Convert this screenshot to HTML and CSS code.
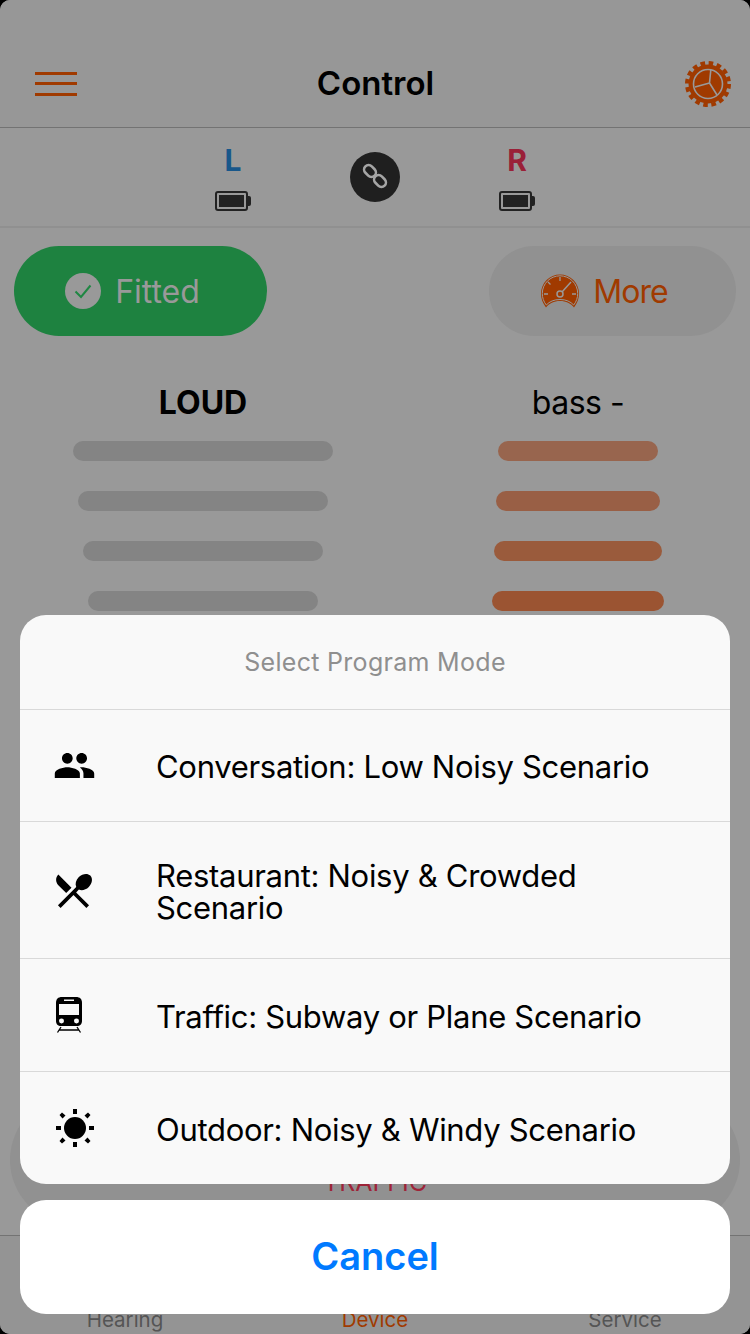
FILE: index.html
```html
<!DOCTYPE html>
<html lang="en">
<head>
    <meta charset="UTF-8">
    <meta name="viewport" content="width=device-width, initial-scale=1.0">
    <title>Control</title>
    <link rel="stylesheet" href="styles.css">
</head>
<body>
    <div class="screen">
        <header class="top-bar">
            <div class="menu-icon"><span></span><span></span><span></span></div>
            <h1>Control</h1>
            <svg class="gear-icon" viewBox="0 0 46 46">
                <circle cx="23" cy="23" r="19.5" fill="#a03a00"/>
                <circle cx="23" cy="23" r="21" fill="none" stroke="#a03a00" stroke-width="4" stroke-dasharray="4.600 3.650"/>
                <circle cx="23" cy="23" r="14.500" fill="none" stroke="#999" stroke-width="1.600"/>
                <path d="M24.500 22 L25.800 9 M24.500 22 L10 26 M24.500 22 L32 34" fill="none" stroke="#999" stroke-width="1.600"/>
            </svg>
        </header>

        <section class="devices">
            <div class="device">
                <span class="side side-left">L</span>
                <div class="battery"><span></span></div>
            </div>
            <div class="link-btn">
                <svg viewBox="0 0 50 50" width="50" height="50">
                    <rect x="13.500" y="14.500" width="13" height="9" rx="4.500" transform="rotate(45 20 19)" fill="none" stroke="#a5a5a5" stroke-width="2.600"/>
                    <rect x="23.500" y="24.500" width="13" height="9" rx="4.500" transform="rotate(45 30 29)" fill="none" stroke="#a5a5a5" stroke-width="2.600"/>
                </svg>
            </div>
            <div class="device">
                <span class="side side-right">R</span>
                <div class="battery"><span></span></div>
            </div>
        </section>

        <section class="actions">
            <button class="pill pill-fitted" type="button">
                <svg viewBox="0 0 36 36" width="36" height="36">
                    <circle cx="18" cy="18" r="18" fill="#999"/>
                    <path d="M10.500 18.500 L16 24 L25.500 12.500" fill="none" stroke="#1f8743" stroke-width="2"/>
                </svg>
                Fitted
            </button>
            <button class="pill pill-more" type="button">
                <svg viewBox="0 0 38 34" width="38" height="34">
                    <path d="M5 33.500 C1.500 29 0 24.500 0 19.500 A19 19 0 0 1 38 19.500 C38 24.500 36.500 29 33 33.500 C30 29.500 25 27 19 27 C13 27 8 29.500 5 33.500 Z" fill="#a03a00"/>
                    <path d="M5.300 31 C2.500 27.500 1.300 23.500 1.300 19.500 A17.700 17.700 0 0 1 36.700 19.500 C36.700 23.500 35.500 27.500 32.700 31 C29.500 27.500 25 25.500 19 25.500 C13 25.500 8.500 27.500 5.300 31 Z" fill="none" stroke="#999" stroke-width="1"/>
                    <path d="M19 3 V7 M7 8 L9.500 10.500 M3 20 H7 M31 20 H35" stroke="#999" stroke-width="1.300"/>
                    <circle cx="19" cy="20" r="3" fill="none" stroke="#999" stroke-width="1.500"/>
                    <path d="M21 18 L30 8" stroke="#999" stroke-width="1.500"/>
                </svg>
                More
            </button>
        </section>

        <section class="levels">
            <div class="level-col">
                <h2 class="level-title level-strong">LOUD</h2>
                <div class="bar bar-grey bar-w260"></div>
                <div class="bar bar-grey bar-w250"></div>
                <div class="bar bar-grey bar-w240"></div>
                <div class="bar bar-grey bar-w230"></div>
            </div>
            <div class="level-col">
                <h2 class="level-title">bass -</h2>
                <div class="bar bar-o1 bar-w160"></div>
                <div class="bar bar-o2 bar-w164"></div>
                <div class="bar bar-o3 bar-w168"></div>
                <div class="bar bar-o4 bar-w172"></div>
            </div>
        </section>

        <div class="program-pill"><span>TRAFFIC</span></div>

        <nav class="tab-bar">
            <span class="tab">Hearing</span>
            <span class="tab tab-active">Device</span>
            <span class="tab">Service</span>
        </nav>

        <div class="sheet-wrap">
            <div class="sheet">
                <div class="sheet-title">Select Program Mode</div>
                <div class="sheet-row">
                    <span class="row-icon">
                        <svg class="icon-people" viewBox="0 0 24 24"><path d="M16 11c1.660 0 2.990-1.340 2.990-3S17.660 5 16 5c-1.660 0-3 1.340-3 3s1.340 3 3 3zm-8 0c1.660 0 2.990-1.340 2.990-3S9.660 5 8 5C6.340 5 5 6.340 5 8s1.340 3 3 3zm0 2c-2.330 0-7 1.170-7 3.500V19h14v-2.500c0-2.330-4.670-3.500-7-3.500zm8 0c-.29 0-.62.02-.97.05 1.160.84 1.970 1.970 1.970 3.450V19h6v-2.500c0-2.330-4.670-3.500-7-3.500z"/></svg>
                    </span>
                    <span class="row-text">Conversation: Low Noisy Scenario</span>
                </div>
                <div class="sheet-row sheet-row-tall">
                    <span class="row-icon">
                        <svg class="icon-food" viewBox="0 0 24 24"><path d="M8.100 13.340l2.830-2.830L3.910 3.500c-1.560 1.560-1.560 4.090 0 5.660l4.190 4.180zm6.780-1.810c1.530.71 3.680.21 5.270-1.380 1.910-1.910 2.280-4.650.81-6.120-1.460-1.460-4.200-1.100-6.120.81-1.590 1.590-2.090 3.740-1.380 5.270L3.700 19.870l1.410 1.410L12 14.410l6.880 6.880 1.410-1.410L13.410 13l1.470-1.470z"/></svg>
                    </span>
                    <span class="row-text">Restaurant: Noisy &amp; Crowded Scenario</span>
                </div>
                <div class="sheet-row">
                    <span class="row-icon">
                        <svg class="icon-train" viewBox="0 0 26 36">
                            <path fill-rule="evenodd" d="M6 0 H20 C24 0 26 2 26 6 V24 C26 27 24 29 21 29 H5 C2 29 0 27 0 24 V6 C0 2 2 0 6 0 Z M8 2.500 V4 H18 V2.500 Z M3 7 V18 H23 V7 Z M5.500 21.500 A2.500 2.500 0 1 0 5.510 26.500 A2.500 2.500 0 1 0 5.500 21.500 Z M20.500 21.500 A2.500 2.500 0 1 0 20.510 26.500 A2.500 2.500 0 1 0 20.500 21.500 Z"/>
                            <path d="M5 30 L1.500 35.500 M21 30 L24.500 35.500 M3.500 33 H22.500" fill="none" stroke="#000" stroke-width="1.300"/>
                        </svg>
                    </span>
                    <span class="row-text">Traffic: Subway or Plane Scenario</span>
                </div>
                <div class="sheet-row">
                    <span class="row-icon">
                        <svg class="icon-sun" viewBox="0 0 38 38">
                            <circle cx="19" cy="19" r="11"/>
                            <path d="M17 0 H21 V5 H17 Z M17 33 H21 V38 H17 Z M0 17 H5 V21 H0 Z M33 17 H38 V21 H33 Z M6 3.500 L9.500 6.500 L6.500 9.500 L3.500 6 Z M32 3.500 L34.500 6 L31.500 9.500 L28.500 6.500 Z M6.500 28.500 L9.500 31.500 L6 34.500 L3.500 32 Z M31.500 28.500 L34.500 32 L32 34.500 L28.500 31.500 Z"/>
                        </svg>
                    </span>
                    <span class="row-text">Outdoor: Noisy &amp; Windy Scenario</span>
                </div>
            </div>
            <button class="cancel-btn" type="button">Cancel</button>
        </div>
    </div>
</body>
</html>
```

FILE: styles.css
```css
body, html {
    margin: 0;
    height: 100%;
    background: #000;
    font-family: Inter, "Noto Sans", sans-serif;
    overflow: hidden;
}
.screen {
    position: relative;
    width: 750px;
    height: 1334px;
    display: flex;
    flex-direction: column;
    background: #999;
    border-radius: 10px;
    overflow: hidden;
}
.top-bar {
    height: 87px;
    padding: 40px 19px 0 35px;
    display: grid;
    grid-template-columns: 1fr auto 1fr;
    align-items: center;
    background: #979797;
    border-bottom: 1px solid #737373;
}
.top-bar h1 {
    margin: -2px 15px 0 0;
    font-size: 33px;
    font-weight: 600;
    color: #000;
}
.menu-icon {
    width: 42px;
    height: 24px;
    display: flex;
    flex-direction: column;
    justify-content: space-between;
}
.menu-icon span {
    height: 3px;
    background: #a03a00;
}
.gear-icon {
    width: 46px;
    height: 46px;
    justify-self: end;
}
.devices {
    height: 98px;
    display: flex;
    justify-content: center;
    align-items: flex-end;
    gap: 99px;
    border-bottom: 2px solid #909090;
}
.device {
    width: 36px;
    height: 84px;
    display: flex;
    flex-direction: column;
    align-items: center;
    justify-content: space-between;
    padding-bottom: 15px;
    box-sizing: border-box;
}
.side {
    font-size: 30px;
    font-weight: 700;
    line-height: 36px;
}
.side-left {
    color: #18578a;
}
.side-right {
    color: #9a2038;
}
.battery {
    position: relative;
    width: 33px;
    height: 20px;
    margin-right: 3px;
    padding: 2px;
    box-sizing: border-box;
    border: 2px solid #222;
    border-radius: 3px;
}
.battery::after {
    content: "";
    position: absolute;
    right: -5px;
    top: 3px;
    width: 3px;
    height: 10px;
    background: #222;
    border-radius: 0 2px 2px 0;
}
.battery span {
    display: block;
    height: 100%;
    background: #222;
}
.link-btn {
    width: 50px;
    height: 50px;
    margin-bottom: 24px;
    border-radius: 50%;
    background: #1f1f1f;
}
.actions {
    display: flex;
    justify-content: space-between;
    padding: 18px 14px 0;
}
.pill {
    height: 90px;
    border: none;
    border-radius: 45px;
    display: flex;
    align-items: center;
    justify-content: center;
    gap: 14px;
    padding: 0 16px 0 0;
    font-family: inherit;
    font-size: 32px;
}
.pill-fitted {
    width: 253px;
    background: #1e8240;
    color: #999;
}
.pill-more {
    width: 247px;
    letter-spacing: -1px;
    background: #919191;
    color: #a03a00;
}
.levels {
    display: flex;
    padding-top: 47px;
}
.level-col {
    display: flex;
    flex-direction: column;
    align-items: center;
    gap: 30px;
    width: 406px;
}
.level-col:last-child {
    width: 344px;
}
.level-title {
    margin: 0 0 -11px;
    height: 39px;
    line-height: 39px;
    font-size: 32px;
    font-weight: 400;
    letter-spacing: -.5px;
    color: #000;
}
.level-strong {
    font-weight: 700;
    letter-spacing: 0;
}
.bar {
    height: 20px;
    border-radius: 10px;
}
.bar-grey { background: #848484; }
.bar-o1 { background: #98654e; }
.bar-o2 { background: #995f45; }
.bar-o3 { background: #9a5b3c; }
.bar-o4 { background: #9b5432; }
.bar-w260 { width: 260px; }
.bar-w250 { width: 250px; }
.bar-w240 { width: 240px; }
.bar-w230 { width: 230px; }
.bar-w160 { width: 160px; }
.bar-w164 { width: 164px; }
.bar-w168 { width: 168px; }
.bar-w172 { width: 172px; }
.program-pill {
    height: 130px;
    margin: auto 10px 10px;
    border-radius: 65px;
    background: #919191;
    display: flex;
    justify-content: center;
    align-items: flex-end;
    padding-bottom: 28px;
    box-sizing: border-box;
    color: #9e2438;
    font-size: 25px;
}
.tab-bar {
    height: 98px;
    display: flex;
    align-items: flex-end;
    background: #949494;
    border-top: 1px solid #737373;
}
.tab {
    flex: 1;
    text-align: center;
    padding-bottom: 2px;
    font-size: 20.5px;
    color: #555;
}
.tab-active {
    color: #a03a00;
}
/* action sheet lies over the page */
.sheet-wrap {
    position: absolute;
    left: 20px;
    right: 20px;
    bottom: 20px;
    display: flex;
    flex-direction: column;
    gap: 16px;
}
.sheet {
    background: #f9f9f9;
    border-radius: 26px;
    overflow: hidden;
}
.sheet-title {
    height: 94px;
    display: flex;
    align-items: center;
    justify-content: center;
    font-size: 25px;
    letter-spacing: .3px;
    color: #8f8f8f;
}
.sheet-row {
    height: 112px;
    display: flex;
    align-items: center;
    border-top: 1px solid #d9d9d9;
    color: #000;
}
.sheet-row:nth-child(2) {
    height: 111px;
}
.sheet-row-tall {
    height: 136px;
}
.row-icon {
    width: 136px;
    flex-shrink: 0;
    display: flex;
    padding-left: 35px;
    box-sizing: border-box;
}
.row-text {
    margin-top: 3px;
    font-size: 31px;
    line-height: 32px;
    letter-spacing: -.3px;
    padding-right: 40px;
}
.icon-people {
    width: 43px;
    height: 43px;
    margin-left: -2px;
}
.icon-food {
    width: 45px;
    height: 45px;
    margin-left: -4px;
}
.icon-train {
    width: 26px;
    height: 36px;
    margin-left: 1px;
}
.icon-sun {
    width: 38px;
    height: 38px;
    margin-left: 1px;
}
.cancel-btn {
    height: 114px;
    border: none;
    border-radius: 26px;
    padding: 0 0 3px;
    background: #fff;
    color: #007aff;
    font-family: inherit;
    font-size: 38px;
    font-weight: 600;
}
```
